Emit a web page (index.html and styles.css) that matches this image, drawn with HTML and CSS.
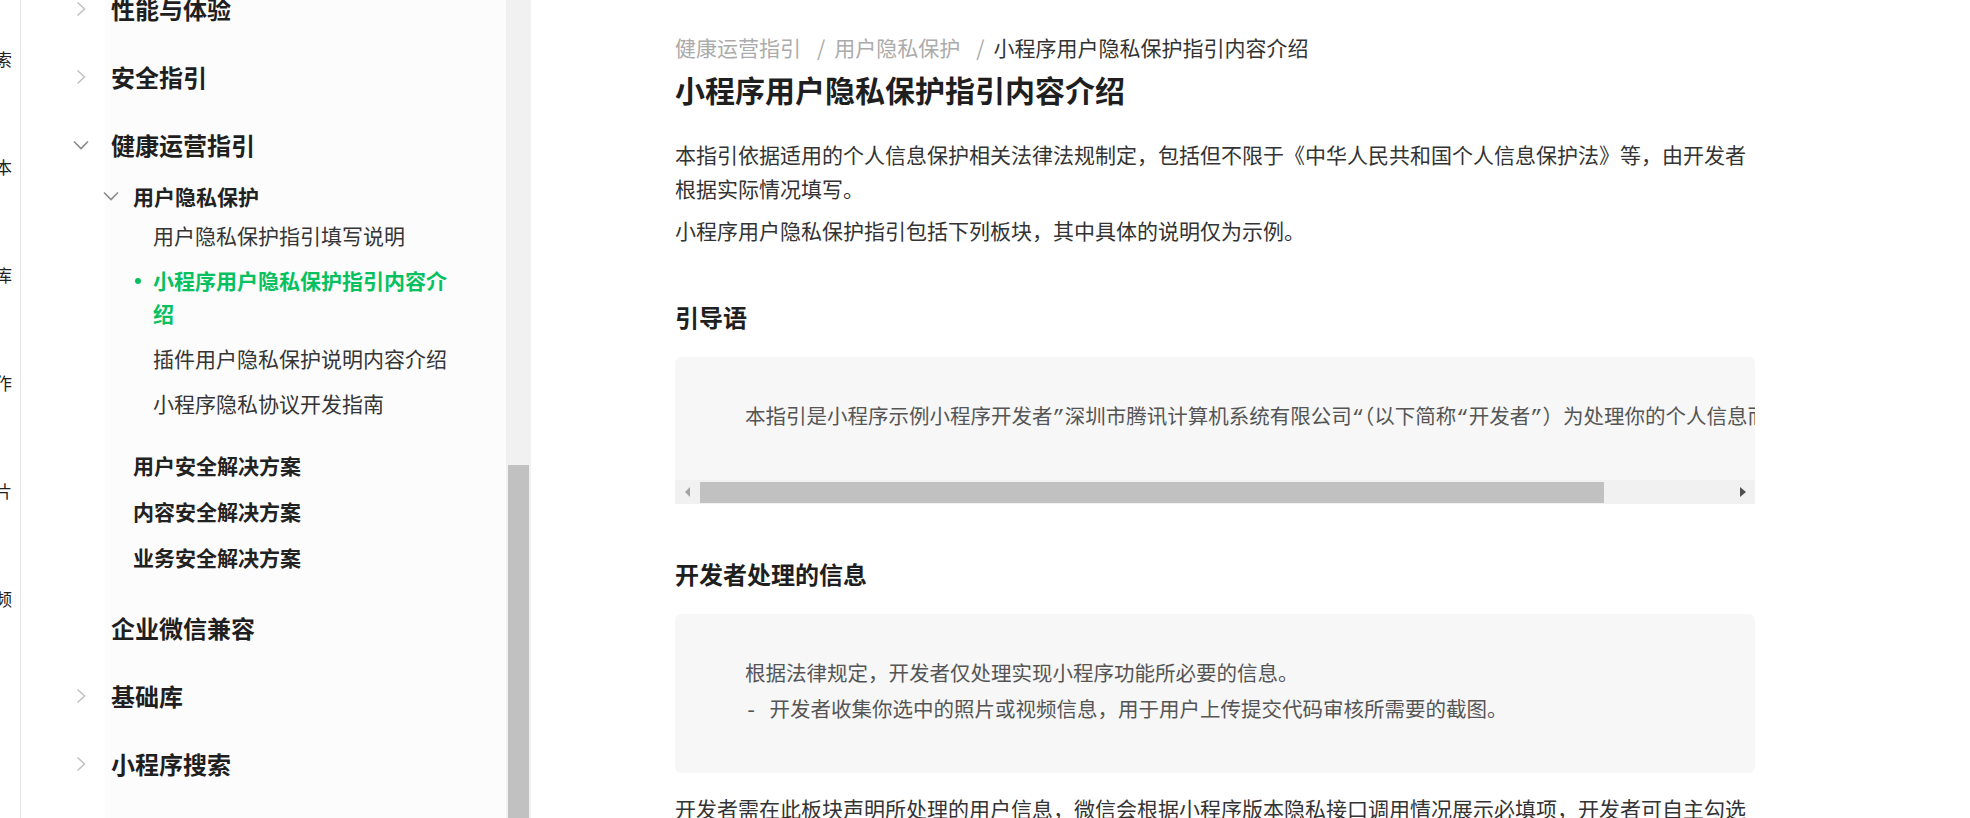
FILE: index.html
```html
<!DOCTYPE html>
<html lang="zh-CN">
<head>
    <meta charset="UTF-8">
    <title>小程序用户隐私保护指引内容介绍</title>
    <link rel="stylesheet" href="styles.css">
</head>
<body>
<div class="page">
    <div class="edge">
        <div class="edge-item">小程序搜索</div>
        <div class="edge-item">版本</div>
        <div class="edge-item">基础库</div>
        <div class="edge-item">操作</div>
        <div class="edge-item">图片</div>
        <div class="edge-item">视频</div>
    </div>

    <aside class="sidebar">
        <ul class="menu">
            <li class="menu-item">
                <div class="menu-title"><span class="arrow"><svg class="chev-right" width="16" height="16" viewBox="0 0 16 16"><polyline points="4.5,1.5 11.5,8 4.5,14.5"/></svg></span>性能与体验</div>
            </li>
            <li class="menu-item">
                <div class="menu-title"><span class="arrow"><svg class="chev-right" width="16" height="16" viewBox="0 0 16 16"><polyline points="4.5,1.5 11.5,8 4.5,14.5"/></svg></span>安全指引</div>
            </li>
            <li class="menu-item open">
                <div class="menu-title"><span class="arrow"><svg class="chev-down" width="16" height="16" viewBox="0 0 16 16"><polyline points="1,4.5 8,11.5 15,4.5"/></svg></span>健康运营指引</div>
                <ul class="sub-menu">
                    <li class="sub-item open">
                        <div class="sub-title"><span class="arrow"><svg class="chev-down" width="16" height="16" viewBox="0 0 16 16"><polyline points="1,4.5 8,11.5 15,4.5"/></svg></span>用户隐私保护</div>
                        <ul class="leaf-list">
                            <li class="leaf"><span class="dot"></span><span>用户隐私保护指引填写说明</span></li>
                            <li class="leaf active"><span class="dot"></span><span>小程序用户隐私保护指引内容介绍</span></li>
                            <li class="leaf"><span class="dot"></span><span>插件用户隐私保护说明内容介绍</span></li>
                            <li class="leaf"><span class="dot"></span><span>小程序隐私协议开发指南</span></li>
                        </ul>
                    </li>
                    <li class="sub-item">
                        <div class="sub-title"><span class="arrow"></span>用户安全解决方案</div>
                    </li>
                    <li class="sub-item">
                        <div class="sub-title"><span class="arrow"></span>内容安全解决方案</div>
                    </li>
                    <li class="sub-item">
                        <div class="sub-title"><span class="arrow"></span>业务安全解决方案</div>
                    </li>
                </ul>
            </li>
            <li class="menu-item">
                <div class="menu-title"><span class="arrow"></span>企业微信兼容</div>
            </li>
            <li class="menu-item">
                <div class="menu-title"><span class="arrow"><svg class="chev-right" width="16" height="16" viewBox="0 0 16 16"><polyline points="4.5,1.5 11.5,8 4.5,14.5"/></svg></span>基础库</div>
            </li>
            <li class="menu-item">
                <div class="menu-title"><span class="arrow"><svg class="chev-right" width="16" height="16" viewBox="0 0 16 16"><polyline points="4.5,1.5 11.5,8 4.5,14.5"/></svg></span>小程序搜索</div>
            </li>
        </ul>
    </aside>

    <div class="vscroll">
        <div class="vthumb"></div>
    </div>

    <main class="main">
        <div class="content">
            <div class="breadcrumb">
                <span>健康运营指引</span><span class="sep">/</span><span>用户隐私保护</span><span class="sep">/</span><span class="current">小程序用户隐私保护指引内容介绍</span>
            </div>
            <h1>小程序用户隐私保护指引内容介绍</h1>

            <p class="first">本指引依据适用的个人信息保护相关法律法规制定，包括但不限于《中华人民共和国个人信息保护法》等，由开发者根据实际情况填写。</p>
            <p>小程序用户隐私保护指引包括下列板块，其中具体的说明仅为示例。</p>

            <h2>引导语</h2>
            <div class="code-block has-scroll">
                <pre class="code">本指引是小程序示例小程序开发者”深圳市腾讯计算机系统有限公司“（以下简称“开发者”）为处理你的个人信息而制定。</pre>
                <div class="hscroll">
                    <span class="hbtn"><span class="tri-left"></span></span>
                    <span class="hthumb"></span>
                    <span class="hrest"></span>
                    <span class="hbtn"><span class="tri-right"></span></span>
                </div>
            </div>

            <h2>开发者处理的信息</h2>
            <div class="code-block">
                <pre class="code">根据法律规定，开发者仅处理实现小程序功能所必要的信息。
- 开发者收集你选中的照片或视频信息，用于用户上传提交代码审核所需要的截图。</pre>
            </div>

            <p class="after">开发者需在此板块声明所处理的用户信息，微信会根据小程序版本隐私接口调用情况展示必填项，开发者可自主勾选其他需要处理的信息。</p>
        </div>
    </main>
</div>
</body>
</html>
```

FILE: styles.css
```css
html, body {
    margin: 0;
    height: 100%;
    overflow: hidden;
}

body {
    font-family: "Noto Sans CJK SC", "Microsoft YaHei", sans-serif;
    color: #333;
    background: #fff;
}

.page {
    display: flex;
    height: 100%;
}

/* outer menu, scrolled almost out of view */
.edge {
    width: 20px;
    flex: none;
    padding-top: 5px;
    border-right: 1px solid #e6e6e6;
    overflow: hidden;
}

.edge-item {
    display: flex;
    justify-content: flex-end;
    padding-right: 8px;
    font-size: 17px;
    line-height: 108px;
    color: #222;
    white-space: nowrap;
    overflow: hidden;
}

/* sidebar */
.sidebar {
    width: 485px;
    flex: none;
    overflow: hidden;
    background: linear-gradient(to right, #fff 84px, #fcfcfc 84px);
}

.menu, .sub-menu, .leaf-list {
    list-style: none;
    margin: 0;
    padding: 0;
}

.menu {
    margin-top: -25px;
}

.arrow {
    display: flex;
    align-items: center;
    flex: none;
}

.arrow svg polyline {
    fill: none;
    stroke-width: 1.6;
}

.chev-right polyline {
    stroke: #c2c2c2;
}

.chev-down polyline {
    stroke: #8a8a8a;
}

.menu-title {
    display: flex;
    align-items: center;
    padding: 17px 0 17px 52px;
    font-size: 24px;
    line-height: 34px;
    font-weight: bold;
    color: #1f1f1f;
}

    .menu-title .arrow {
        width: 38px;
    }

.menu-item.open > .menu-title {
    padding-bottom: 11px;
}

.menu-item.open > .sub-menu {
    padding-bottom: 14px;
}

.sub-title {
    display: flex;
    align-items: center;
    padding: 6px 0 6px 82px;
    font-size: 21px;
    line-height: 34px;
    font-weight: bold;
    color: #222;
}

    .sub-title .arrow {
        width: 30px;
    }

.sub-item.open > .sub-title {
    padding-bottom: 0;
}

.sub-item.open > .leaf-list {
    margin-bottom: 16px;
}

.leaf {
    display: flex;
    align-items: flex-start;
    padding: 6px 50px 6px 114px;
    font-size: 21px;
    line-height: 33px;
    color: #353535;
}

.dot {
    width: 18px;
    flex: none;
    height: 33px;
    position: relative;
}

.leaf.active {
    color: #07c160;
    font-weight: bold;
}

    .leaf.active .dot::before {
        content: "";
        position: absolute;
        left: 0;
        top: 14px;
        width: 6px;
        height: 6px;
        border-radius: 50%;
        background: #07c160;
    }

/* sidebar scrollbar */
.vscroll {
    width: 25px;
    flex: none;
    display: flex;
    flex-direction: column;
    background: #f1f1f1;
}

.vthumb {
    flex: 1;
    margin: 465px 2px 0 2px;
    background: #c1c1c1;
}

/* main */
.main {
    flex: 1;
    padding-left: 144px;
    overflow: hidden;
}

.content {
    width: 1080px;
}

.breadcrumb {
    margin-top: 30px;
    font-size: 21px;
    line-height: 34px;
    color: #ababab;
    white-space: nowrap;
}

    .breadcrumb .sep {
        margin: 0 9px 0 16px;
    }

    .breadcrumb .current {
        color: #333;
    }

h1 {
    margin: 4px 0 0;
    font-size: 30px;
    line-height: 42px;
    font-weight: bold;
    color: #1f1f1f;
}

p {
    margin: 8px 0 0;
    font-size: 21px;
    line-height: 34px;
    color: #333;
}

    p.first {
        margin-top: 27px;
    }

    p.after {
        margin-top: 18px;
    }

h2 {
    margin: 53px 0 0;
    font-size: 24px;
    line-height: 34px;
    font-weight: bold;
    color: #1f1f1f;
}

.code-block {
    margin-top: 23px;
    background: #f7f7f7;
    border-radius: 6px;
    overflow: hidden;
}

    .code-block.has-scroll {
        border-radius: 6px 6px 0 0;
    }

.code-block + h2 {
    margin-top: 53px;
}

.code {
    margin: 0;
    padding: 44px 70px 43px;
    font-family: "Liberation Mono", "Noto Sans CJK SC", monospace;
    font-size: 20.5px;
    line-height: 36px;
    color: #555;
    white-space: pre;
    overflow: hidden;
}

/* code block horizontal scrollbar */
.hscroll {
    display: flex;
    align-items: center;
    height: 24px;
    background: #f1f1f1;
}

.hbtn {
    width: 25px;
    height: 24px;
    flex: none;
    display: flex;
    align-items: center;
    justify-content: center;
}

.hthumb {
    width: 904px;
    height: 21px;
    margin-top: 1px;
    flex: none;
    background: #c1c1c1;
}

.hrest {
    flex: 1;
}

.tri-left {
    width: 0;
    height: 0;
    border-top: 5px solid transparent;
    border-bottom: 5px solid transparent;
    border-right: 5px solid #a3a3a3;
}

.tri-right {
    width: 0;
    height: 0;
    border-top: 5px solid transparent;
    border-bottom: 5px solid transparent;
    border-left: 6px solid #505050;
}
```
